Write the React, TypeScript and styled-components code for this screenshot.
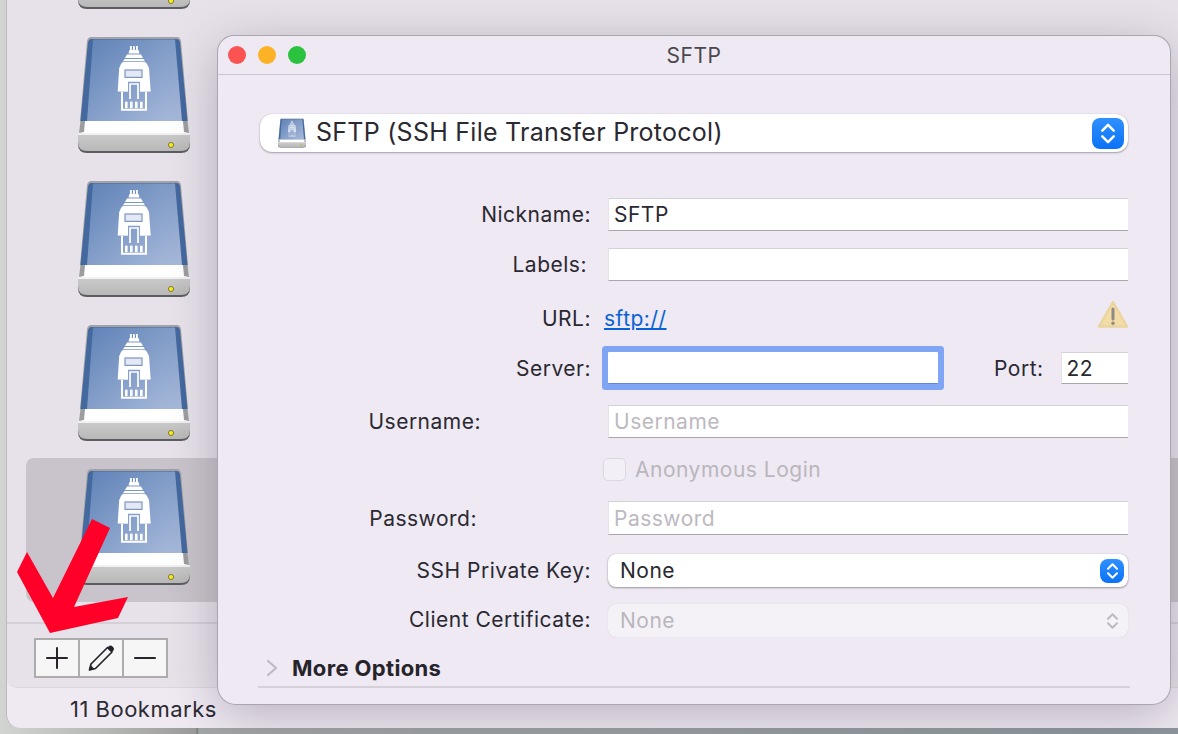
import React from 'react';
import styled, { createGlobalStyle } from 'styled-components';

const Global = createGlobalStyle`
  html, body { margin: 0; padding: 0; height: 100%; overflow: hidden; }
  body { font-family: Inter, "Noto Sans", "Liberation Sans", sans-serif; color: #2a2830; }
`;

const Desktop = styled.div`
  position: relative;
  width: 1178px;
  height: 734px;
  overflow: hidden;
  box-sizing: border-box;
  padding: 0 0 6px 6px;
  background: linear-gradient(90deg, #d2d4d1 0, #b4b6b4 110px, #9a9b9a 196px, #77797a 197px, #a4a7a7 199px, #8c979b 100%);
`;
const LeftEdge = styled.div`
  width: 100%;
  height: 100%;
  display: flex;
  flex-direction: column;
  background: #efe9f2;
  border-bottom-left-radius: 14px;
  border-left: 1px solid #bdb9bf;
  box-sizing: border-box;
  overflow: hidden;
`;
const Panel = styled.div`
  height: 688px;
  flex: none;
  display: flex;
  flex-direction: column;
  background: #e7e2ea;
  border-bottom: 1px solid #dcd7df;
  border-bottom-left-radius: 10px;
  box-sizing: border-box;
`;
const BookmarkList = styled.div`
  height: 624px;
  flex: none;
  box-sizing: border-box;
  padding: 0 0 20px 19px;
  display: flex;
  flex-direction: column;
  justify-content: flex-end;
  overflow: hidden;
  border-bottom: 2px solid #d5d0d8;
`;
const BookmarkRow = styled.div<{ $selected?: boolean }>`
  height: 144px;
  flex: none;
  box-sizing: border-box;
  margin-top: ${p => (p.$selected ? '2px' : '0')};
  padding: ${p => (p.$selected ? '11px' : '13px')} 0 0 52px;
  background: ${p => (p.$selected ? '#c9c4cb' : 'transparent')};
  border-radius: ${p => (p.$selected ? '8px 0 0 8px' : '0')};
  box-shadow: ${p => (p.$selected ? 'none' : 'inset 12px 1px 0 #e7e2ea, inset 0 1px 0 #dfdae2')};
`;
const Toolbar = styled.div`
  display: flex;
  padding: 14px 0 0 27px;
`;
const ToolGroup = styled.div`
  display: flex;
  height: 40px;
  border: 2px solid #adadad;
  box-sizing: border-box;
  background: #adadad;
  gap: 2px;
`;
const ToolButton = styled.div`
  width: 42px;
  display: flex;
  align-items: center;
  justify-content: center;
  background: #f6f6f6;
`;
const Footer = styled.div`
  flex: 1;
  display: flex;
  align-items: center;
  padding: 1px 0 0 63px;
  font-size: 22px;
  letter-spacing: 0.5px;
  color: #2b2930;
`;
const Arrow = styled.svg`
  position: absolute;
  left: 0;
  top: 500px;
  z-index: 3;
`;
const Sheet = styled.div`
  position: absolute;
  left: 218px;
  top: 36px;
  width: 952px;
  height: 668px;
  z-index: 2;
  background: #eee9f3;
  border-radius: 16px 16px 18px 18px;
  box-shadow: 0 0 0 1px #aaa6ad, 0 10px 50px rgba(40, 30, 50, 0.28);
  overflow: hidden;
`;
const TitleBar = styled.div`
  position: relative;
  height: 39px;
  box-sizing: border-box;
  display: flex;
  align-items: center;
  justify-content: center;
  border-bottom: 1px solid #c9c4cd;
  font-size: 21px;
  letter-spacing: 0.5px;
  color: #4a474e;
`;
const Lights = styled.div`
  position: absolute;
  left: 10px;
  top: 10px;
  display: flex;
  gap: 12px;
`;
const Light = styled.span<{ $c: string }>`
  width: 18px;
  height: 18px;
  border-radius: 50%;
  background: ${p => p.$c};
`;
const Content = styled.div`
  padding: 39px 42px 0;
`;
const Protocol = styled.div`
  height: 38px;
  display: flex;
  align-items: center;
  padding: 0 4px 0 18px;
  gap: 10px;
  background: #fff;
  border-radius: 12px;
  box-shadow: 0 1px 2px rgba(60, 50, 70, 0.4), 0 0 1px rgba(60, 50, 70, 0.3);
  font-size: 25px;
  letter-spacing: 0.26px;
  color: #2a2830;
`;
const ProtocolName = styled.span`
  flex: 1;
  padding-bottom: 2px;
`;
const Row = styled.div<{ $top: number; $h: number }>`
  display: flex;
  align-items: center;
  height: ${p => p.$h}px;
  margin-top: ${p => p.$top}px;
`;
const Label = styled.label<{ $inset?: number; $lift?: number }>`
  width: 331px;
  flex: none;
  box-sizing: border-box;
  padding-right: ${p => p.$inset ?? 0}px;
  padding-bottom: ${p => p.$lift ?? 0}px;
  text-align: right;
  font-size: 21px;
  letter-spacing: 0.5px;
  margin-right: 17px;
  color: #2a2830;
`;
const Input = styled.div<{ $w?: number; $placeholder?: boolean }>`
  flex: ${p => (p.$w ? 'none' : '1')};
  width: ${p => (p.$w ? `${p.$w}px` : 'auto')};
  height: 100%;
  box-sizing: border-box;
  display: flex;
  align-items: center;
  padding-left: 5px;
  background: #fff;
  border-top: 1px solid #d5d1d8;
  border-left: 1px solid #e6e2e8;
  border-bottom: 1.5px solid #aaa6ad;
  font-size: 21px;
  letter-spacing: 0.5px;
  color: ${p => (p.$placeholder ? '#bcb9bf' : '#2a2830')};
`;
const Focused = styled.div`
  width: 330px;
  height: 32px;
  flex: none;
  background: #fff;
  box-sizing: border-box;
  border-bottom: 1px solid #5f86dc;
  border-radius: 1px;
  box-shadow: 0 0 0 6px #7fa5f4;
`;
const PortLabel = styled.label`
  margin-left: 56px;
  margin-right: 17px;
  font-size: 21px;
  letter-spacing: 0.5px;
  color: #2a2830;
`;
const UrlLink = styled.a`
  margin-left: -4px;
  flex: 1;
  font-size: 21px;
  letter-spacing: 0.5px;
  color: #0a63d6;
  text-decoration: underline;
`;
const WarnIcon = styled.svg`
  flex: none;
  margin: 0 -1px 7px 0;
`;
const Check = styled.span`
  width: 23px;
  height: 23px;
  margin-left: -5px;
  margin-right: 9px;
  box-sizing: border-box;
  border: 1px solid #dcd8df;
  border-radius: 5px;
  background: #f3eff6;
`;
const CheckText = styled.span`
  font-size: 21px;
  letter-spacing: 0.5px;
  color: #bab6bd;
`;
const Select = styled.div<{ $disabled?: boolean }>`
  flex: 1;
  height: 100%;
  box-sizing: border-box;
  display: flex;
  align-items: center;
  justify-content: space-between;
  padding: 0 4px 0 12px;
  border-radius: 8px;
  background: ${p => (p.$disabled ? '#f5f2f7' : '#fff')};
  box-shadow: ${p => (p.$disabled ? '0 0 1px rgba(60,50,70,.2)' : '0 1px 2px rgba(60,50,70,.45), 0 0 1px rgba(60,50,70,.3)')};
  font-size: 21px;
  letter-spacing: 0.5px;
  color: ${p => (p.$disabled ? '#bab6bd' : '#2a2830')};
`;
const Stepper = styled.span<{ $w: number; $h: number; $plain?: boolean }>`
  width: ${p => p.$w}px;
  height: ${p => p.$h}px;
  display: flex;
  align-items: center;
  justify-content: center;
  border-radius: 8px;
  background: ${p => (p.$plain ? 'none' : 'linear-gradient(180deg, #2f90ff, #0b72f6)')};
`;
const MoreRow = styled.div`
  display: flex;
  align-items: center;
  gap: 14px;
  height: 36px;
  margin: 13px -2px 0;
  padding-left: 8px;
  border-bottom: 2px solid #d5d0d9;
  box-sizing: content-box;
  font-size: 22px;
  font-weight: 700;
  letter-spacing: 0.35px;
  color: #26242a;
`;

const Drive = ({ w = 112, h = 116, faded = false }: { w?: number; h?: number; faded?: boolean }) => {
  const o = faded ? 0.65 : 1;
  return (
    <svg width={w} height={h} viewBox="0 0 112 116" style={{ display: 'block' }}>
      <defs>
        <linearGradient id="dFace" x1="0" y1="0" x2="1" y2="1">
          <stop offset="0" stopColor="#5f82b7" />
          <stop offset="1" stopColor="#a9bbdb" />
        </linearGradient>
        <linearGradient id="dBase" x1="0" y1="0" x2="0" y2="1">
          <stop offset="0" stopColor="#cbcbcb" />
          <stop offset="1" stopColor="#b8b8b8" />
        </linearGradient>
      </defs>
      <path d="M13 0H99Q102 0 103 4L110 84V92H2V84L9 4Q10 0 13 0Z" fill="#a3a3a7" />
      <path d="M13 2H99Q101 2 102 5L109.5 84H2.5L10 5Q11 2 13 2Z" fill="#44699f" />
      <path d="M15 2.5H97L104 84H9Z" fill="url(#dFace)" />
      <path d="M2.5 84H109.5L110.5 96H1.5Z" fill="#fff" />
      <path d="M2.5 84L1 96L6 95L7 84ZM109.5 84L111 96L106 95L105 84Z" fill="#9d9da0" />
      <path d="M0 96H112V107Q112 116 103 116H9Q0 116 0 107Z" fill="#5c5c60" />
      <path d="M0 96H112V105Q112 114 103 114H9Q0 114 0 105Z" fill="url(#dBase)" />
      <path d="M0 96H112V98H0Z" fill="#f1f1f1" />
      <circle cx="93" cy="108" r="2.6" fill="#f6ea12" stroke="#77763f" strokeWidth="0.9" />
      <g fill="#fff" opacity={o}>
        <rect x="52" y="9" width="1.8" height="7" />
        <rect x="55" y="9" width="1.8" height="7" />
        <rect x="58" y="9" width="1.8" height="7" />
        <path d="M51.5 13H60.5L61.5 16.5H50.5Z" />
        <path d="M49 17.5H63L65 21H47Z" />
        <path d="M46.5 22H65.5L67 24.2H45Z" />
        <path d="M45.5 25H66.5Q68 25 69 27L71 31L72.7 54.5L62 54.7V44.7H50V54.7L39.7 54.5L41.2 31L43 27Q44 25 45.5 25Z" />
        <path d="M43 54.7H45V71.8H67V54.7H69V73.8H43Z" />
        <rect x="47" y="64.7" width="2.6" height="6.5" />
        <rect x="52" y="64.7" width="2.6" height="6.5" />
        <rect x="57" y="64.7" width="2.6" height="6.5" />
        <rect x="62" y="64.7" width="2.6" height="6.5" />
      </g>
      <rect x="47" y="33" width="17" height="7.4" fill="#e3e8f2" stroke="#7a97c4" strokeWidth="1.2" opacity={o} />
      <path d="M52 62V47H60V62" fill="none" stroke="#fff" strokeWidth="1.7" opacity={o} />
    </svg>
  );
};

const Updown = ({ c, w, h, sw }: { c: string; w: number; h: number; sw: number }) => (
  <svg width={w} height={h} viewBox="0 0 14 20" fill="none" stroke={c} strokeWidth={sw} strokeLinecap="round" strokeLinejoin="round">
    <path d="M2 7.5L7 2.5L12 7.5" />
    <path d="M2 12.5L7 17.5L12 12.5" />
  </svg>
);

const Warning = () => (
  <WarnIcon width="32" height="29" viewBox="0 0 32 29">
    <path d="M16 2L30 26.5H2Z" fill="#f3dca6" stroke="#ead4a0" strokeWidth="2.5" strokeLinejoin="round" />
    <path d="M16 9V19" stroke="#8e8a84" strokeWidth="3" strokeLinecap="round" />
    <circle cx="16" cy="23.3" r="1.7" fill="#8e8a84" />
  </WarnIcon>
);

export default function App() {
  return (
    <Desktop>
      <Global />
      <LeftEdge>
        <Panel>
          <BookmarkList>
            <BookmarkRow><Drive /></BookmarkRow>
            <BookmarkRow><Drive /></BookmarkRow>
            <BookmarkRow><Drive /></BookmarkRow>
            <BookmarkRow><Drive /></BookmarkRow>
            <BookmarkRow $selected><Drive /></BookmarkRow>
          </BookmarkList>
          <Toolbar>
            <ToolGroup>
              <ToolButton>
                <svg width="22" height="22" viewBox="0 0 22 22" stroke="#26242a" strokeWidth="2" strokeLinecap="round">
                  <path d="M11 1V21M1 11H21" />
                </svg>
              </ToolButton>
              <ToolButton>
                <svg width="30" height="30" viewBox="0 0 30 30">
                  <path d="M5 21L21.5 4.5L26 9L9.5 25.5L3.5 27Z" fill="none" stroke="#26242a" strokeWidth="1.7" strokeLinejoin="round" />
                  <path d="M22.5 3.5Q24.5 1.5 26.5 3.5L27 4Q29 6 27 8L25.5 9L21.5 5Z" fill="#26242a" />
                  <path d="M3 27.5L4.5 22L8.5 26Z" fill="#26242a" />
                </svg>
              </ToolButton>
              <ToolButton>
                <svg width="22" height="4" viewBox="0 0 22 4" stroke="#26242a" strokeWidth="2" strokeLinecap="round">
                  <path d="M1 2H21" />
                </svg>
              </ToolButton>
            </ToolGroup>
          </Toolbar>
        </Panel>
        <Footer>11 Bookmarks</Footer>
      </LeftEdge>

      <Arrow width="140" height="140" viewBox="0 500 140 140">
        <polygon points="92,519 110,528 74,607 128,597 118,618 50,633 17,572 27,552 53,598" fill="#ff0028" />
      </Arrow>

      <Sheet>
        <TitleBar>
          <Lights>
            <Light $c="#fb5352" />
            <Light $c="#fdb225" />
            <Light $c="#2ac23f" />
          </Lights>
          SFTP
        </TitleBar>
        <Content>
          <Protocol>
            <Drive w={28} h={30} faded />
            <ProtocolName>SFTP (SSH File Transfer Protocol)</ProtocolName>
            <Stepper $w={32} $h={31}>
              <Updown c="#fff" w={16} h={23} sw={2.2} />
            </Stepper>
          </Protocol>

          <Row $top={46} $h={33}>
            <Label>Nickname:</Label>
            <Input>SFTP</Input>
          </Row>
          <Row $top={17} $h={33}>
            <Label $inset={4}>Labels:</Label>
            <Input />
          </Row>
          <Row $top={20} $h={34}>
            <Label>URL:</Label>
            <UrlLink>sftp://</UrlLink>
            <Warning />
          </Row>
          <Row $top={17} $h={32}>
            <Label>Server:</Label>
            <Focused />
            <PortLabel>Port:</PortLabel>
            <Input>22</Input>
          </Row>
          <Row $top={21} $h={33}>
            <Label $inset={110}>Username:</Label>
            <Input $placeholder>Username</Input>
          </Row>
          <Row $top={20} $h={23}>
            <Label />
            <Check />
            <CheckText>Anonymous Login</CheckText>
          </Row>
          <Row $top={20} $h={34}>
            <Label $inset={114}>Password:</Label>
            <Input $placeholder>Password</Input>
          </Row>
          <Row $top={19} $h={33}>
            <Label>SSH Private Key:</Label>
            <Select>
              None
              <Stepper $w={24} $h={24}>
                <Updown c="#fff" w={13} h={18} sw={2.2} />
              </Stepper>
            </Select>
          </Row>
          <Row $top={17} $h={33}>
            <Label $lift={3}>Client Certificate:</Label>
            <Select $disabled>
              None
              <Stepper $plain $w={24} $h={24}>
                <Updown c="#bcb9bf" w={13} h={18} sw={2.2} />
              </Stepper>
            </Select>
          </Row>
          <MoreRow>
            <svg width="12" height="18" viewBox="0 0 12 18" fill="none" stroke="#bdbac0" strokeWidth="2.2" strokeLinecap="round" strokeLinejoin="round">
              <path d="M2 2L10 9L2 16" />
            </svg>
            More Options
          </MoreRow>
        </Content>
      </Sheet>
    </Desktop>
  );
}
